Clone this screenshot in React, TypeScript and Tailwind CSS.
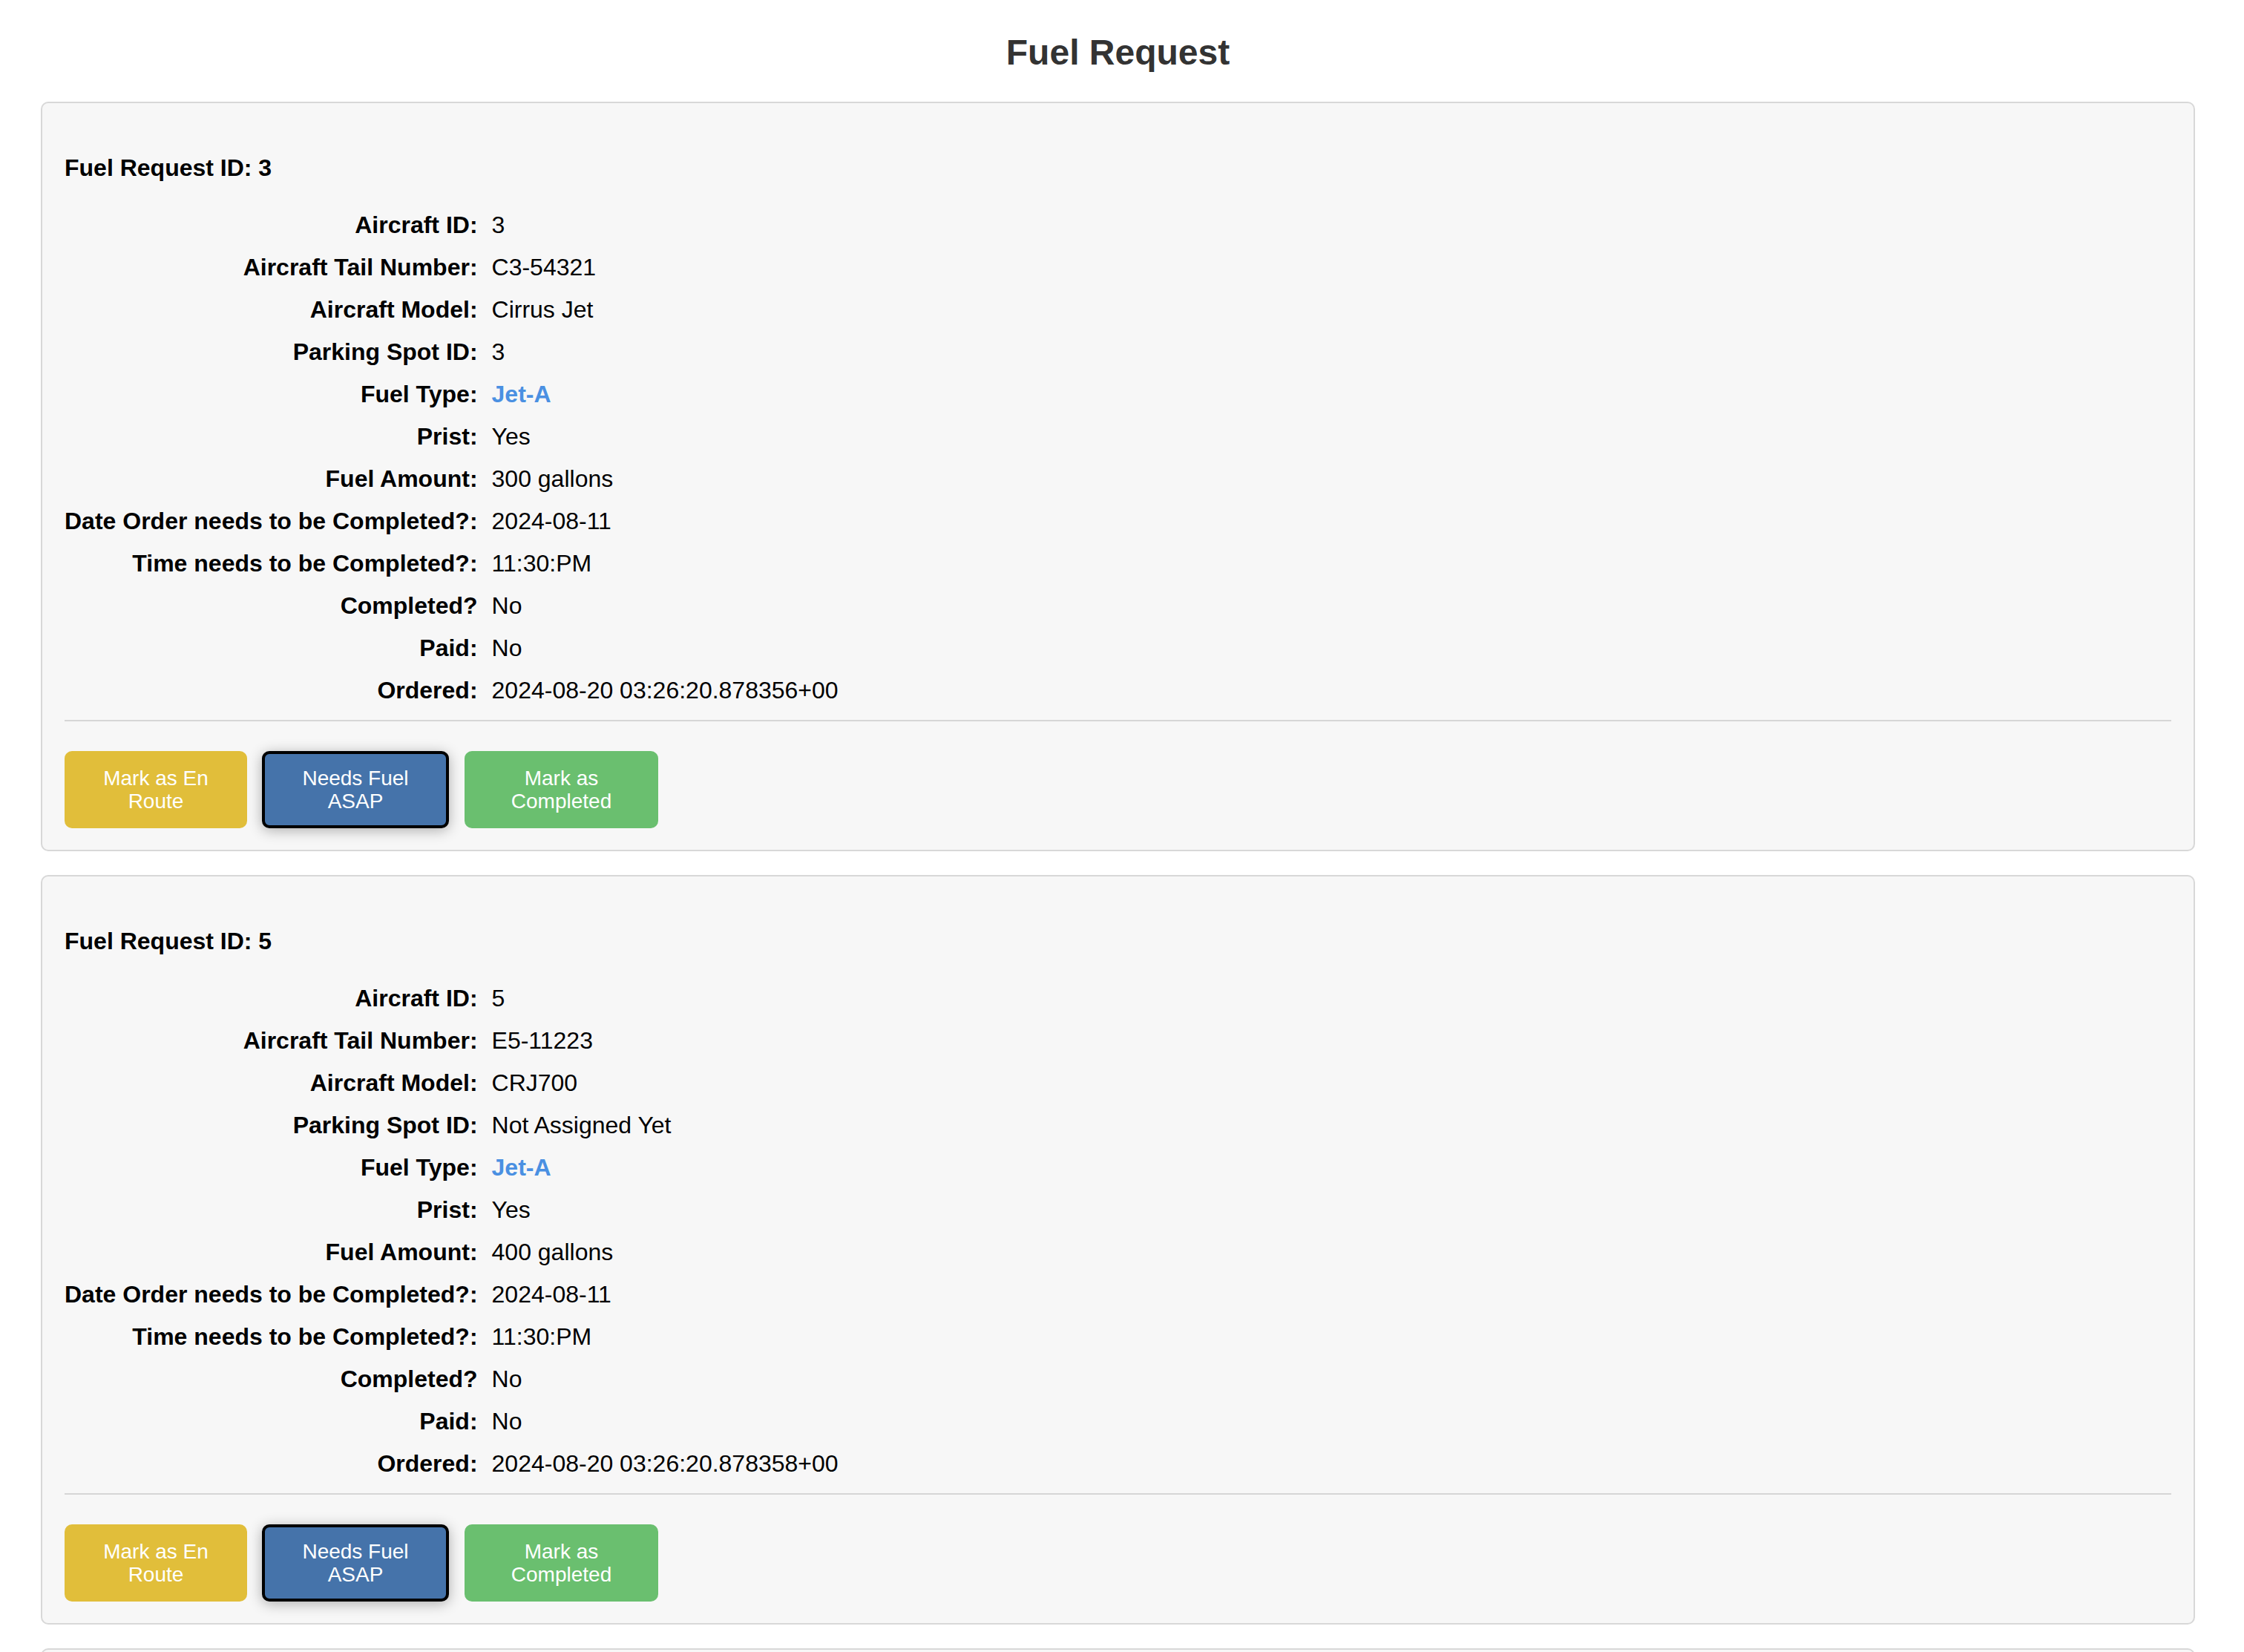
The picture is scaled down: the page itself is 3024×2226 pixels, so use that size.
import React from "react";

type Req = {
  id: number;
  aircraftId: string;
  tail: string;
  model: string;
  spot: string;
  fuel: string;
  prist: string;
  amount: string;
  date: string;
  time: string;
  completed: string;
  paid: string;
  ordered: string;
};

const requests: Req[] = [
  {
    id: 3,
    aircraftId: "3",
    tail: "C3-54321",
    model: "Cirrus Jet",
    spot: "3",
    fuel: "Jet-A",
    prist: "Yes",
    amount: "300 gallons",
    date: "2024-08-11",
    time: "11:30:PM",
    completed: "No",
    paid: "No",
    ordered: "2024-08-20 03:26:20.878356+00",
  },
  {
    id: 5,
    aircraftId: "5",
    tail: "E5-11223",
    model: "CRJ700",
    spot: "Not Assigned Yet",
    fuel: "Jet-A",
    prist: "Yes",
    amount: "400 gallons",
    date: "2024-08-11",
    time: "11:30:PM",
    completed: "No",
    paid: "No",
    ordered: "2024-08-20 03:26:20.878358+00",
  },
];

function Row({ label, children }: { label: string; children: React.ReactNode }) {
  return (
    <>
      <div className="text-right font-bold leading-[57px] whitespace-nowrap">{label}</div>
      <div className="leading-[57px] whitespace-nowrap">{children}</div>
    </>
  );
}

function Card({ r }: { r: Req }) {
  return (
    <div className="bg-[#f7f7f7] border-2 border-[#d8d8d8] rounded-[10px] px-[30px] pt-[30px] pb-[29px]">
      <div className="mt-[39px] text-[32px] leading-[37px] font-bold text-black">
        Fuel Request ID: {r.id}
      </div>
      <div className="mt-[30px] grid grid-cols-[max-content_1fr] gap-x-[19px] text-[32px] text-black">
        <Row label="Aircraft ID:">{r.aircraftId}</Row>
        <Row label="Aircraft Tail Number:">{r.tail}</Row>
        <Row label="Aircraft Model:">{r.model}</Row>
        <Row label="Parking Spot ID:">{r.spot}</Row>
        <Row label="Fuel Type:">
          <span className="font-bold text-[#4a90e2]">{r.fuel}</span>
        </Row>
        <Row label="Prist:">{r.prist}</Row>
        <Row label="Fuel Amount:">{r.amount}</Row>
        <Row label="Date Order needs to be Completed?:">{r.date}</Row>
        <Row label="Time needs to be Completed?:">{r.time}</Row>
        <Row label="Completed?">{r.completed}</Row>
        <Row label="Paid:">{r.paid}</Row>
        <Row label="Ordered:">{r.ordered}</Row>
      </div>
      <div className="mt-[11px] h-[2px] bg-[#d6d6d6]" />
      <div className="mt-[40px] flex items-start gap-[20px]">
        <button className="w-[246px] h-[104px] rounded-[10px] bg-[#e1be3a] text-white text-[28px] leading-[31px] px-[40px] text-center">
          Mark as En Route
        </button>
        <button className="w-[252px] h-[104px] rounded-[10px] bg-[#4573aa] border-[4px] border-black text-white text-[28px] leading-[31px] px-[36px] text-center shadow-[0_3px_18px_rgba(0,0,0,0.3)]">
          Needs Fuel ASAP
        </button>
        <button className="ml-[1px] w-[261px] h-[104px] rounded-[10px] bg-[#6abf6f] text-white text-[28px] leading-[31px] px-[40px] text-center">
          Mark as Completed
        </button>
      </div>
    </div>
  );
}

export default function App() {
  return (
    <div
      className="h-screen overflow-hidden bg-white pt-[43px] pl-[55px] pr-[66px]"
      style={{ fontFamily: '"Liberation Sans", Arial, Helvetica, sans-serif' }}
    >
      <h1 className="text-center text-[48px] leading-[55px] font-bold text-[#333333] mb-[39px]">
        Fuel Request
      </h1>
      <div className="flex flex-col gap-[32px]">
        {requests.map((r) => (
          <Card key={r.id} r={r} />
        ))}
        <div className="shrink-0 h-[300px] bg-[#f7f7f7] border-2 border-[#d8d8d8] rounded-[10px]" />
      </div>
    </div>
  );
}
